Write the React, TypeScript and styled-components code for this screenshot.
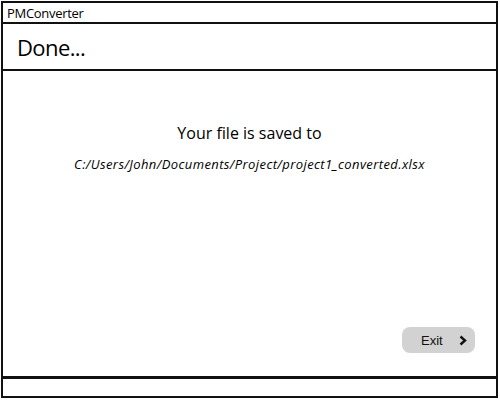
import React from "react";
import styled, { createGlobalStyle } from "styled-components";

const Global = createGlobalStyle`
  html, body { margin: 0; padding: 0; background: #fff; }
  body { font-family: "Open Sans", "Liberation Sans", sans-serif; color: #000; }
  * { box-sizing: border-box; }
`;

const Window = styled.div`
  margin: 1px;
  width: 497px;
  height: 397px;
  border: 2px solid #111;
  display: flex;
  flex-direction: column;
  background: #fff;
`;

const TitleBar = styled.div`
  height: 21px;
  border-bottom: 2px solid #111;
  display: flex;
  align-items: center;
  padding-left: 4px;
  font-size: 13px;
  letter-spacing: -0.3px;
`;

const Header = styled.div`
  height: 47px;
  border-bottom: 2px solid #111;
  display: flex;
  align-items: center;
  padding-left: 14px;
  font-size: 22px;
  letter-spacing: -0.6px;
`;

const Content = styled.div`
  flex: 1;
  display: flex;
  flex-direction: column;
  align-items: center;
  padding: 52px 21px 23px 21px;
`;

const Message = styled.div`
  font-size: 16px;
  line-height: 20px;
`;

const Path = styled.div`
  margin-top: 13px;
  font-size: 13px;
  line-height: 16px;
  font-style: italic;
  letter-spacing: 0.4px;
`;

const Button = styled.button`
  margin-top: auto;
  align-self: flex-end;
  width: 73px;
  height: 26px;
  border: none;
  border-radius: 8px;
  background: #d2d2d2;
  font-family: "Liberation Sans", Arial, sans-serif;
  font-size: 13px;
  color: #111;
  display: flex;
  align-items: center;
  padding: 0 8px 0 19px;
  justify-content: space-between;
`;

const StatusBar = styled.div`
  height: 20px;
  border-top: 3px solid #111;
`;

const Chevron = () => (
  <svg width="8" height="11" viewBox="0 0 8 11">
    <path d="M1.5 1.5 L6 5.5 L1.5 9.5" fill="none" stroke="#111" strokeWidth="2.4" />
  </svg>
);

export default function App() {
  return (
    <>
      <Global />
      <Window>
        <TitleBar>PMConverter</TitleBar>
        <Header>Done...</Header>
        <Content>
          <Message>Your file is saved to</Message>
          <Path>C:/Users/John/Documents/Project/project1_converted.xlsx</Path>
          <Button>
            Exit
            <Chevron />
          </Button>
        </Content>
        <StatusBar />
      </Window>
    </>
  );
}
